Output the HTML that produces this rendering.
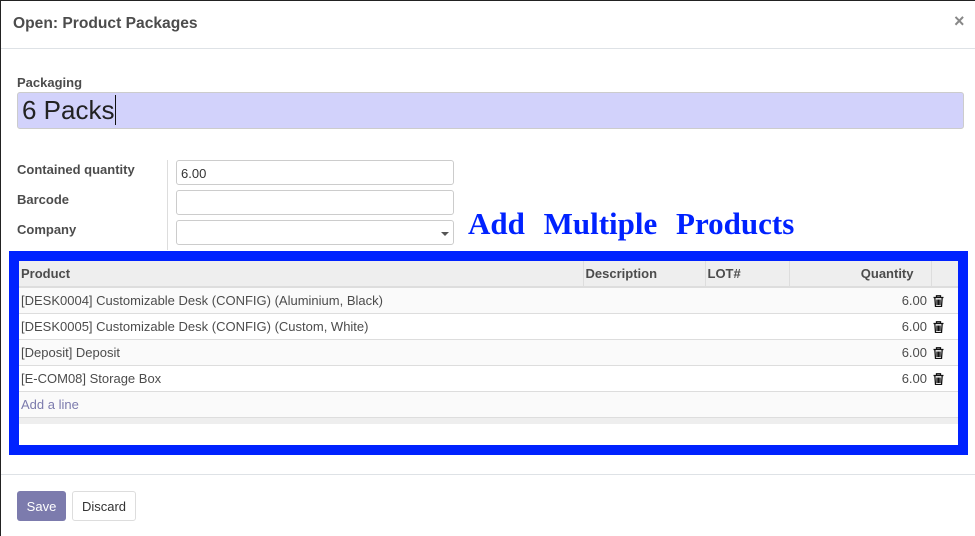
<!DOCTYPE html>
<html><head><style>
body{margin:0;width:975px;height:536px;overflow:hidden;background:#fff;font-family:"Liberation Sans",sans-serif;color:#4c4c4c;position:relative}
.a{position:absolute}
.lbl{font-size:13px;font-weight:bold;color:#4c4c4c}
.inp{position:absolute;left:176px;width:276px;height:23px;border:1px solid #ccc;border-radius:3px;background:#fff;font-size:13px;color:#333;box-sizing:content-box}
table{border-collapse:collapse;width:939px;font-size:13px;table-layout:fixed}
th{background:#eee;height:25px;text-align:left;font-weight:bold;padding:0 2px;border-left:1px solid #ddd;border-bottom:2px solid #ddd}
td{height:25px;padding:0 2px;border-bottom:1px solid #ddd;white-space:nowrap}
tr.r td{background:#fafafa}
td.q{text-align:right;padding-right:4px}
svg{display:block}
</style></head><body>
<div class="a" style="left:0;top:0;width:975px;height:1px;background:#222"></div>
<div class="a" style="left:0;top:0;width:1px;height:536px;background:#222"></div>
<div class="a" style="left:13px;top:15px;font-size:15.6px;font-weight:bold;color:#4c4c4c">Open: Product Packages</div>
<div class="a" style="left:954px;top:11px;font-size:18px;font-weight:bold;color:#888">×</div>
<div class="a" style="left:1px;top:48px;width:974px;height:1px;background:#dee2e6"></div>
<div class="a lbl" style="left:17px;top:75px">Packaging</div>
<div class="a" style="left:17px;top:92px;width:945px;height:35px;background:#d2d2fb;border:1px solid #ccc;border-radius:3px"></div>
<div class="a" style="left:22px;top:95px;font-size:26px;color:#222">6 Packs<span style="display:inline-block;width:1px;height:30px;background:#111;vertical-align:-6px"></span></div>
<div class="a lbl" style="left:17px;top:162px">Contained quantity</div>
<div class="a lbl" style="left:17px;top:192px">Barcode</div>
<div class="a lbl" style="left:17px;top:222px">Company</div>
<div class="a" style="left:167px;top:160px;width:1px;height:90px;background:#ddd"></div>
<div class="inp" style="top:160px"><span style="position:absolute;left:4px;top:5px">6.00</span></div>
<div class="inp" style="top:190px"></div>
<div class="inp" style="top:220px"><span style="position:absolute;right:4px;top:11px;border-left:4px solid transparent;border-right:4px solid transparent;border-top:4px solid #555"></span></div>
<div class="a" style="left:468px;top:206px;font-family:'Liberation Serif',serif;font-weight:bold;font-size:31px;color:#0022ff;word-spacing:11px">Add Multiple Products</div>
<div class="a" style="left:9px;top:251px;width:939px;height:184px;border:10px solid #0022ff;background:#fff">
<table>
<colgroup><col style="width:564px"><col style="width:122px"><col style="width:84px"><col style="width:142px"><col style="width:27px"></colgroup>
<tr><th style="border-left:none">Product</th><th>Description</th><th>LOT#</th><th style="text-align:right;padding-right:17px">Quantity</th><th></th></tr>
<tr class="r"><td>[DESK0004] Customizable Desk (CONFIG) (Aluminium, Black)</td><td></td><td></td><td class="q">6.00</td><td><svg width="11" height="12" viewBox="0 0 11 12"><path d="M0.5 2.5h10M3.5 2.5V0.8h4v1.7M1.8 2.5l0.7 9h6l0.7-9M4 4.5v5.5M5.5 4.5v5.5M7 4.5v5.5" fill="none" stroke="#111" stroke-width="1.3"/></svg></td></tr>
<tr><td>[DESK0005] Customizable Desk (CONFIG) (Custom, White)</td><td></td><td></td><td class="q">6.00</td><td><svg width="11" height="12" viewBox="0 0 11 12"><path d="M0.5 2.5h10M3.5 2.5V0.8h4v1.7M1.8 2.5l0.7 9h6l0.7-9M4 4.5v5.5M5.5 4.5v5.5M7 4.5v5.5" fill="none" stroke="#111" stroke-width="1.3"/></svg></td></tr>
<tr class="r"><td>[Deposit] Deposit</td><td></td><td></td><td class="q">6.00</td><td><svg width="11" height="12" viewBox="0 0 11 12"><path d="M0.5 2.5h10M3.5 2.5V0.8h4v1.7M1.8 2.5l0.7 9h6l0.7-9M4 4.5v5.5M5.5 4.5v5.5M7 4.5v5.5" fill="none" stroke="#111" stroke-width="1.3"/></svg></td></tr>
<tr><td>[E-COM08] Storage Box</td><td></td><td></td><td class="q">6.00</td><td><svg width="11" height="12" viewBox="0 0 11 12"><path d="M0.5 2.5h10M3.5 2.5V0.8h4v1.7M1.8 2.5l0.7 9h6l0.7-9M4 4.5v5.5M5.5 4.5v5.5M7 4.5v5.5" fill="none" stroke="#111" stroke-width="1.3"/></svg></td></tr>
<tr class="r"><td style="color:#7c7bad">Add a line</td><td></td><td></td><td></td><td></td></tr>
</table>
<div style="height:6px;background:#eee"></div>
</div>
<div class="a" style="left:1px;top:474px;width:974px;height:1px;background:#dee2e6"></div>
<div class="a" style="left:17px;top:491px;width:49px;height:30px;background:#7c7bad;border-radius:3px;color:#fff;font-size:13px;line-height:31px;text-align:center">Save</div>
<div class="a" style="left:72px;top:491px;width:62px;height:28px;border:1px solid #ddd;border-radius:3px;color:#333;font-size:13px;line-height:30px;text-align:center">Discard</div>
</body></html>
